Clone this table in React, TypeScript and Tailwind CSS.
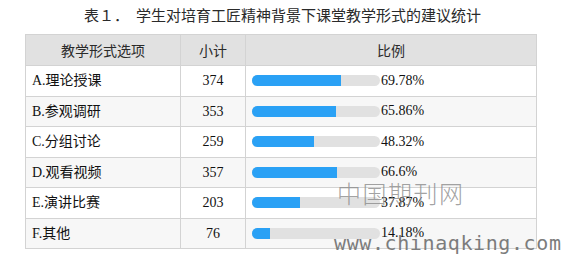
const rows = [
  { label: 'A.理论授课', count: 374, pct: 69.78 },
  { label: 'B.参观调研', count: 353, pct: 65.86 },
  { label: 'C.分组讨论', count: 259, pct: 48.32 },
  { label: 'D.观看视频', count: 357, pct: 66.6 },
  { label: 'E.演讲比赛', count: 203, pct: 37.87 },
  { label: 'F.其他', count: 76, pct: 14.18 },
]

const cjk = "font-['Noto_Sans_CJK_SC',sans-serif]"
const serif = "font-['Liberation_Serif','Noto_Sans_CJK_SC',serif]"

export default function App() {
  return (
    <div className="relative w-[565px] h-[256px] bg-white overflow-hidden text-black">
      {/* Title */}
      <div className={`h-[34px] pt-[5px] text-center text-[15px] leading-[20px] text-[#2a2a2a] ${cjk}`}>
        表１．<span className="ml-[7px]">学生对培育工匠精神背景下课堂教学形式的建议统计</span>
      </div>

      {/* Table */}
      <table className="ml-[25px] w-[512px] border-collapse table-fixed">
        <thead>
          <tr className="bg-[#e1e1e1] h-[31px]">
            <th className={`w-[155px] border border-[#d3d3d3] font-normal text-[14px] text-[#2a2a2a] ${cjk}`}>教学形式选项</th>
            <th className={`w-[65px] border border-[#d3d3d3] font-normal text-[14px] text-[#2a2a2a] ${cjk}`}>小计</th>
            <th className={`border border-[#d3d3d3] font-normal text-[14px] text-[#2a2a2a] ${cjk}`}>比例</th>
          </tr>
        </thead>
        <tbody>
          {rows.map((r, i) => (
            <tr key={r.label} className={`h-[30.5px] ${i % 2 === 1 ? 'bg-[#f7f7f7]' : 'bg-white'}`}>
              <td className={`border border-[#d3d3d3] pl-[6px] text-[14px] text-[#111] ${serif}`}>{r.label}</td>
              <td className={`border border-[#d3d3d3] text-center text-[14px] text-[#111] ${serif}`}>{r.count}</td>
              <td className="border border-[#d3d3d3] pl-[6px]">
                <div className="flex items-center">
                  <div className="w-[128px] h-[11px] rounded-full bg-[#e1e1e1] overflow-hidden">
                    <div className="h-full bg-[#2aa1f5]" style={{ width: `${r.pct}%` }} />
                  </div>
                  <span className={`ml-[1px] text-[14px] leading-none text-[#111] ${serif}`}>{r.pct}%</span>
                </div>
              </td>
            </tr>
          ))}
        </tbody>
      </table>

      {/* Watermark */}
      <div className={`absolute left-[337px] top-[181px] text-[24px] tracking-[1.5px] leading-none text-[#8a8a8a]/80 font-light ${cjk}`}>
        中国期刊网
      </div>
      <div className="absolute left-[334px] top-[233px] text-[20px] leading-none tracking-[0.6px] text-[#7c7c7c] font-['DejaVu_Sans_Mono',monospace]">
        www.chinaqking.com
      </div>
    </div>
  )
}
